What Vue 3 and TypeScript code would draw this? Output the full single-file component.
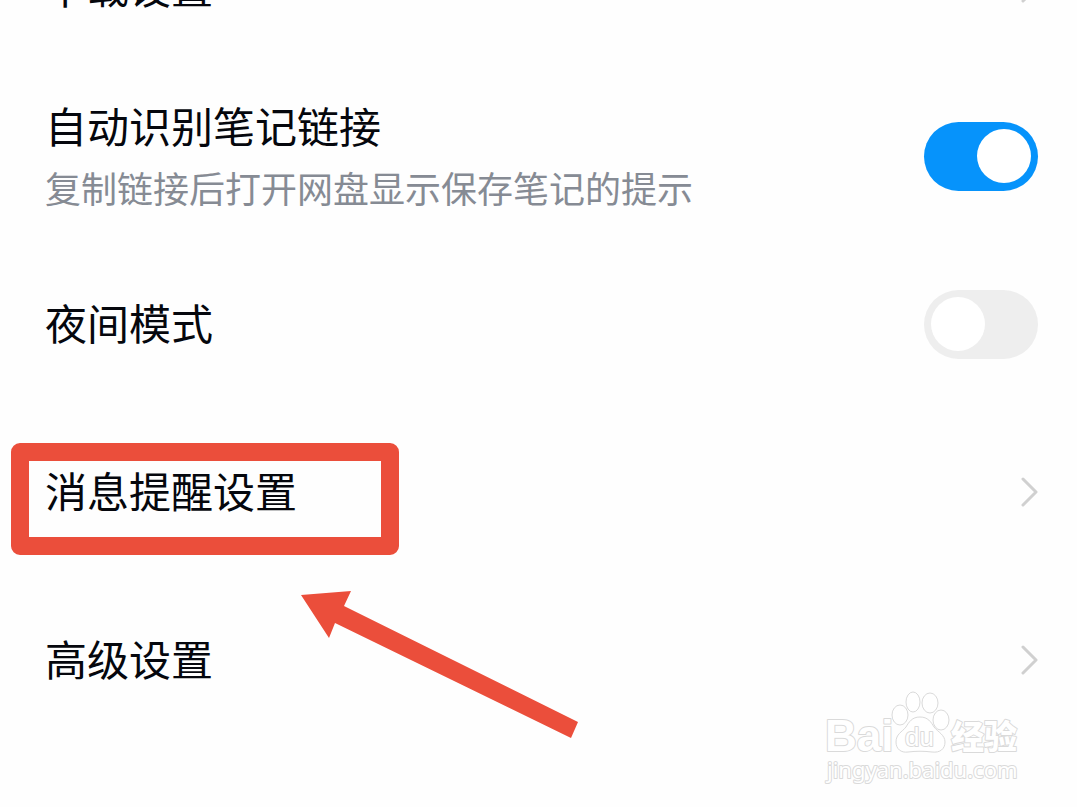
<script setup lang="ts">
import { reactive } from 'vue'

interface Setting {
  id: string
  title: string
  note?: string
  kind: 'link' | 'switch'
  on?: boolean
  marked?: boolean
}

const settings = reactive<Setting[]>([
  { id: 'download', title: '下载设置', kind: 'link' },
  { id: 'notes', title: '自动识别笔记链接', note: '复制链接后打开网盘显示保存笔记的提示', kind: 'switch', on: true },
  { id: 'night', title: '夜间模式', kind: 'switch', on: false },
  { id: 'message', title: '消息提醒设置', kind: 'link', marked: true },
  { id: 'advanced', title: '高级设置', kind: 'link' },
])
</script>

<template>
  <main class="page">
    <ul class="list">
      <li v-for="item in settings" :key="item.id" class="item">
        <label v-if="item.kind === 'switch'" class="row" :for="item.id">
          <span class="texts" :class="{ double: item.note }">
            <span class="title">{{ item.title }}</span>
            <span v-if="item.note" class="note">{{ item.note }}</span>
          </span>
          <input :id="item.id" v-model="item.on" class="switch" type="checkbox" role="switch" />
        </label>
        <button v-else class="row" type="button">
          <span class="title">{{ item.title }}</span>
          <svg class="chevron" viewBox="0 0 18 30" aria-hidden="true">
            <path d="M3 2 L16 15 L3 28" />
          </svg>
        </button>
        <span v-if="item.marked" class="frame" aria-hidden="true"></span>
      </li>
    </ul>

    <svg class="arrow" viewBox="0 0 280 150" aria-hidden="true">
      <path d="M1 5 L51 1 L44 16 L278 132 L271 148 L35 33 L29 48 Z" />
    </svg>

    <svg class="watermark" viewBox="0 0 230 120" role="img" aria-label="Baidu 经验">
      <text class="latin" x="15" y="71">Bai</text>
      <ellipse cx="90" cy="35" rx="8" ry="10" />
      <ellipse cx="103" cy="22" rx="7" ry="10" />
      <ellipse cx="120" cy="23" rx="8" ry="10" />
      <ellipse cx="131" cy="40" rx="8" ry="10" />
      <path d="M110 37 C102 37 99 42 96 47 C92 52 86 54 86 62 C86 69 91 73 98 72 C106 71 114 71 122 72 C130 73 135 69 135 62 C135 55 128 52 124 47 C121 42 118 37 110 37 Z" />
      <text class="du" x="95" y="66">du</text>
      <text class="han" x="141" y="69">经验</text>
      <text class="site" x="17" y="98">jingyan.baidu.com</text>
    </svg>
  </main>
</template>

<style>
body {
  margin: 0;
  background: #fefefe;
}
</style>

<style scoped>
.page {
  position: relative;
  min-height: 100vh;
  overflow: hidden;
  background: #fefefe;
  color: #05070d;
  font-family: "Liberation Sans", "Noto Sans CJK SC", sans-serif;
}

.list {
  margin: -96px 0 0;
  padding: 0;
  list-style: none;
}

.item {
  position: relative;
}

.row {
  display: flex;
  align-items: center;
  justify-content: space-between;
  box-sizing: border-box;
  width: 100%;
  min-height: 168px;
  padding: 0 39px 0 45px;
  border: 0;
  background: none;
  color: inherit;
  font: inherit;
  text-align: left;
  cursor: pointer;
}

.texts {
  display: flex;
  flex-direction: column;
}

.double {
  padding-top: 4px;
}

.title {
  padding-top: 4px;
  font-size: 42px;
  line-height: 62px;
}

.note {
  color: #868b94;
  font-size: 36px;
  line-height: 62px;
}

.switch {
  appearance: none;
  flex: none;
  display: flex;
  align-items: center;
  box-sizing: border-box;
  width: 114px;
  height: 69px;
  margin: 0;
  padding: 0 7px;
  border-radius: 35px;
  background: #eeeeee;
  cursor: pointer;
}

.switch::before {
  content: "";
  width: 54px;
  height: 54px;
  border-radius: 50%;
  background: #ffffff;
}

.switch:checked {
  justify-content: flex-end;
  background: #0693fb;
}

.chevron {
  flex: none;
  width: 18px;
  height: 30px;
  fill: none;
  stroke: #d0d0d0;
  stroke-width: 3;
  stroke-linecap: round;
  stroke-linejoin: round;
}

.frame {
  position: absolute;
  top: 35px;
  left: 11px;
  right: 0;
  box-sizing: border-box;
  max-width: 388px;
  height: 112px;
  border: 18px solid #eb4e3b;
  border-radius: 9px;
  pointer-events: none;
}

.arrow {
  position: absolute;
  top: 590px;
  left: 300px;
  width: 280px;
  height: 150px;
  fill: #eb4e3b;
  pointer-events: none;
}

.watermark {
  position: absolute;
  top: 680px;
  right: 37px;
  width: 230px;
  height: 120px;
  fill: #ffffff;
  stroke: #dadada;
  stroke-width: 1;
  pointer-events: none;
}

.watermark text {
  stroke-width: 2;
  stroke-linejoin: round;
  paint-order: stroke;
}

.latin {
  font: bold 44px "Liberation Sans", sans-serif;
}

.du {
  font: 26px "Liberation Sans", sans-serif;
}

.han {
  font: 900 33px "Noto Sans CJK SC", sans-serif;
}

.site {
  font: 22px "Noto Sans", sans-serif;
}
</style>
